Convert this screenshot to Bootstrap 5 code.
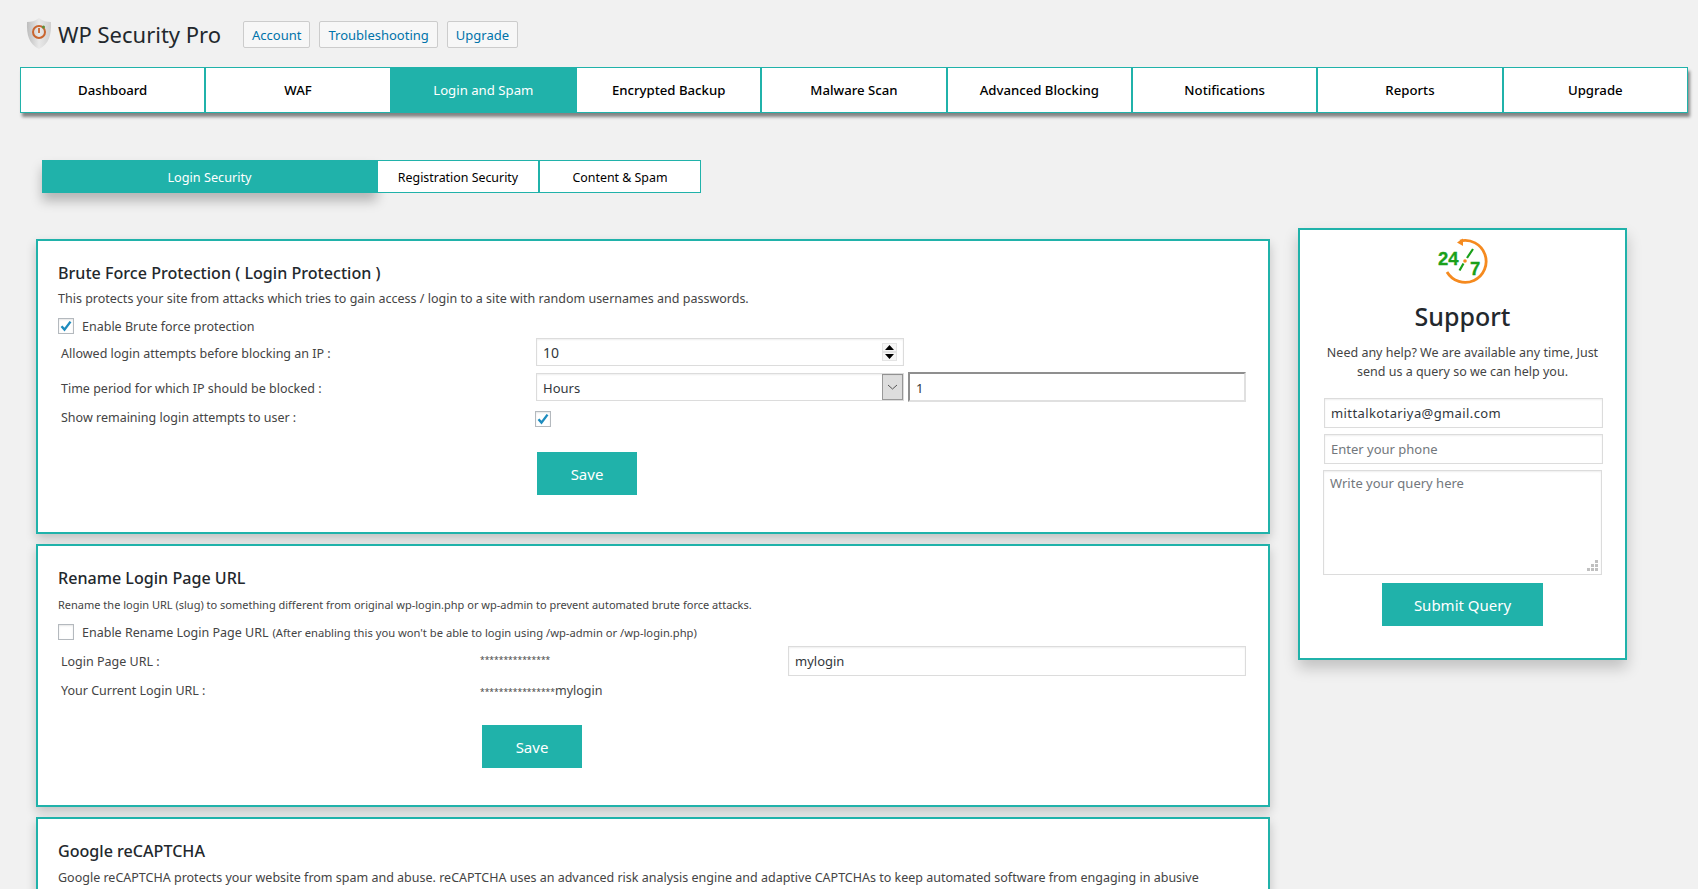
<!DOCTYPE html>
<html lang="en">
<head>
<meta charset="utf-8">
<title>WP Security Pro</title>
<link href="https://cdn.jsdelivr.net/npm/bootstrap@5.3.0/dist/css/bootstrap.min.css" rel="stylesheet">
<style>
html,body{height:889px;overflow:hidden}
body{background:#f1f1f1;font-family:"Noto Sans",sans-serif;font-size:12.5px;color:#444;line-height:20px}
.hdr{padding:17px 0 0 26px;height:67px}
.hdr-title{font-size:22px;line-height:35px;color:#23282d;margin:0 22px 0 6px;font-weight:400}
.hdr-logo{margin-top:1px}
.hdr-btn{border:1px solid #ccc;background:#f7f7f7;color:#0073aa;font-size:13px;line-height:26px;height:27px;padding:0 8px;border-radius:2px;margin:4px 9px 0 0;text-decoration:none}
.tabs{margin:0 10px 0 20px;box-shadow:2px 4px 3px rgba(0,0,0,.45);height:46px}
.tab-i{flex:1 1 0;border:1px solid #20b2aa;background:#fff;color:#000;font-size:13.2px;font-weight:500;text-decoration:none}
.tab-i.on{background:#20b2aa;color:#fff;font-weight:400}
.subs{margin:47px 0 0 42px;height:33px}
.sub-i{width:162px;border:1px solid #20b2aa;background:#fff;color:#000;font-size:12.4px;text-decoration:none;padding-top:2px}
.sub-i.on{width:335px;background:#20b2aa;color:#fff;box-shadow:0 8px 12px rgba(0,0,0,.25);font-size:12.7px;padding-top:0}
.main-wrap{margin:35px 0 0 36px}
.left-col{width:1234px;margin-top:11px}
.pane{border:2px solid #20b2aa;border-radius:0;background:#fff;padding:20px 20px 37px 20px;margin-bottom:10px;box-shadow:0 5px 10px rgba(0,0,0,.2)}
.pane h6{font-size:16.1px;line-height:24px;font-weight:500;color:#23282d;margin:0 0 3px}
.pane p{margin:0 0 -2px;line-height:22px;color:#444}
.pane p.tiny{font-size:11px}
.pane-b h6{margin-bottom:4px}
.chk{appearance:none;width:16px;height:16px;border:1px solid #b4b9be;background:#fff;box-shadow:inset 0 1px 2px rgba(0,0,0,.1);flex:none;margin:0}
.chk:checked{background:#fff url("data:image/svg+xml,%3Csvg xmlns='http://www.w3.org/2000/svg' viewBox='0 0 16 16'%3E%3Cpath d='M3.5 8.2l3 3.4 6-8' fill='none' stroke='%231e8cbe' stroke-width='2.4'/%3E%3C/svg%3E") center/16px no-repeat}
.chk-row{height:16px;margin-top:10px}
.chk-row label{margin-left:8px;line-height:16px;padding-top:2px}
.chk-row small{font-size:11.2px;margin-left:4px}
.lbl{width:478px;padding:4px 0 0 3px;flex:none}
.fld{border:1px solid #dcdcdc;border-radius:0;box-shadow:inset 0 1px 2px rgba(0,0,0,.07);height:28px;padding:1px 6px 0;font-size:13px;color:#32373c;background:#fff;line-height:26px}
.fld:focus{box-shadow:none;border-color:#dcdcdc}
.fld-big{font-size:14px}
.fld-wrap{width:368px}
.spin{right:7px;top:5px}
.sel{width:368px;appearance:none;background:#fff url("data:image/svg+xml,%3Csvg xmlns='http://www.w3.org/2000/svg' width='21' height='26'%3E%3Crect x='.5' y='.5' width='20' height='25' fill='%23ddd' stroke='%23999'/%3E%3Cpath d='M6 11l4.5 4 4.500-4' fill='none' stroke='%23555'/%3E%3C/svg%3E") right center no-repeat}
.inp-1{width:338px;margin-left:4px;height:30px;border-width:2px;border-color:#8f8f8f #e0e0e0 #e0e0e0 #8f8f8f;box-shadow:none}
.inp-1:focus{border-color:#8f8f8f #e0e0e0 #e0e0e0 #8f8f8f}
.row-a{margin-top:4px;height:28px}
.row-b{margin-top:6px;height:30px}
.row-c{margin-top:9px;height:16px}
.row-c .lbl{margin-top:-5px;width:477px;padding-top:2px}
.go{display:block;width:100px;height:43px;background:#20b2aa;color:#fff;font-size:15px;border:0;border-radius:0;padding:2px 0 0;margin:25px 0 0 479px}
.go:hover{background:#20b2aa;color:#fff}
.go.g2{margin-left:424px}
.lbl2{width:422px;padding:2px 0 0 3px;flex:none}
.stars{width:308px;flex:none;font-size:8.5px;line-height:20px}
.stars2{font-size:8.5px}
.row-d{margin-top:6px;height:30px}
.row-d .fld{width:458px;height:30px;flex:none;padding-top:0}
.row-d .stars{margin-top:-2px}
.row-e{margin-top:4px;height:20px}
.row-e .cur{padding-top:2px}
.help{width:329px;height:432px;margin-left:28px;border:2px solid #20b2aa;background:#fff;box-shadow:0 8px 14px rgba(0,0,0,.2);border-radius:0;padding:5px 24px 0}
.help h4{font-size:25px;line-height:32px;font-weight:500;color:#23282d;margin:15px 0 11px;text-align:center}
.help p{line-height:19px;margin:0 0 17px;text-align:center}
.help .fld{display:block;width:279px;height:30px;margin:0 0 6px;font-size:13px;line-height:28px;padding-top:0}
.help .fld.mail{letter-spacing:.4px}
.help .fld::placeholder,.help .area::placeholder{color:#72777c;opacity:1}
.help .area{height:105px;margin:0 0 8px -1px;resize:none;padding:2px 6px;line-height:20px;background:#fff url("data:image/svg+xml,%3Csvg xmlns='http://www.w3.org/2000/svg' width='11' height='11' fill='%23c0c0c0'%3E%3Crect x='8' width='3' height='3'/%3E%3Crect x='4' y='4' width='3' height='3'/%3E%3Crect x='8' y='4' width='3' height='3'/%3E%3Crect y='8' width='3' height='3'/%3E%3Crect x='4' y='8' width='3' height='3'/%3E%3Crect x='8' y='8' width='3' height='3'/%3E%3C/svg%3E") right 3px bottom 3px no-repeat}
.go-wide{width:161px;margin:0 auto;display:block;font-size:15px}
.logo247{margin-left:4px}
</style>
</head>
<body>
<div class="hdr d-flex align-items-start">
  <svg class="hdr-logo" width="26" height="31" viewBox="0 0 26 31" aria-label="shield logo">
    <defs><linearGradient id="sg" x1="0" x2="1" y1="0" y2="0"><stop offset="0" stop-color="#bdbdbd"/><stop offset=".5" stop-color="#e9e9e9"/><stop offset="1" stop-color="#cfcfcf"/></linearGradient></defs>
    <path d="M13 0C9 3 5 4 1 4c-.5 13 2 22 12 27 10-5 12.500-14 12-27-4 0-8-1-12-4z" fill="url(#sg)"/>
    <circle cx="13" cy="14" r="6" fill="none" stroke="#c9652f" stroke-width="2"/>
    <path d="M13 10v5" stroke="#c9652f" stroke-width="1.800"/>
    <circle cx="17.500" cy="9" r="1.500" fill="#5b8f3a"/>
  </svg>
  <h1 class="hdr-title">WP Security Pro</h1>
  <a class="hdr-btn" href="#">Account</a>
  <a class="hdr-btn" href="#">Troubleshooting</a>
  <a class="hdr-btn" href="#">Upgrade</a>
</div>

<nav class="tabs d-flex">
  <a class="tab-i d-flex align-items-center justify-content-center" href="#">Dashboard</a>
  <a class="tab-i d-flex align-items-center justify-content-center" href="#">WAF</a>
  <a class="tab-i on d-flex align-items-center justify-content-center" href="#">Login and Spam</a>
  <a class="tab-i d-flex align-items-center justify-content-center" href="#">Encrypted Backup</a>
  <a class="tab-i d-flex align-items-center justify-content-center" href="#">Malware Scan</a>
  <a class="tab-i d-flex align-items-center justify-content-center" href="#">Advanced Blocking</a>
  <a class="tab-i d-flex align-items-center justify-content-center" href="#">Notifications</a>
  <a class="tab-i d-flex align-items-center justify-content-center" href="#">Reports</a>
  <a class="tab-i d-flex align-items-center justify-content-center" href="#">Upgrade</a>
</nav>

<div class="subs d-flex">
  <a class="sub-i on d-flex align-items-center justify-content-center" href="#">Login Security</a>
  <a class="sub-i d-flex align-items-center justify-content-center" href="#">Registration Security</a>
  <a class="sub-i d-flex align-items-center justify-content-center" href="#">Content &amp; Spam</a>
</div>

<div class="main-wrap d-flex align-items-start">
  <div class="left-col">
    <section class="pane">
      <h6>Brute Force Protection ( Login Protection )</h6>
      <p>This protects your site from attacks which tries to gain access / login to a site with random usernames and passwords.</p>
      <div class="chk-row d-flex align-items-center"><input class="chk" type="checkbox" id="c1" checked><label for="c1">Enable Brute force protection</label></div>
      <div class="row-a d-flex align-items-center">
        <div class="lbl">Allowed login attempts before blocking an IP :</div>
        <div class="fld-wrap position-relative">
          <input class="fld fld-big form-control" type="text" value="10">
          <svg class="spin position-absolute" width="15" height="18" viewBox="0 0 15 18"><rect width="15" height="18" fill="#e4e4e4"/><rect x="1" y="1" width="13" height="7" fill="#f6f6f6"/><rect x="1" y="10" width="13" height="7" fill="#f6f6f6"/><path d="M7.500 2l4.500 5H3z M7.500 16L3 11h9z" fill="#000"/></svg>
        </div>
      </div>
      <div class="row-b d-flex align-items-center">
        <div class="lbl">Time period for which IP should be blocked :</div>
        <select class="fld sel"><option>Hours</option></select>
        <input class="fld inp-1 form-control" type="text" value="1">
      </div>
      <div class="row-c d-flex align-items-center">
        <div class="lbl">Show remaining login attempts to user :</div>
        <input class="chk" type="checkbox" checked>
      </div>
      <button class="btn go" type="button">Save</button>
    </section>

    <section class="pane pane-b">
      <h6>Rename Login Page URL</h6>
      <p class="tiny">Rename the login URL (slug) to something different from original wp-login.php or wp-admin to prevent automated brute force attacks.</p>
      <div class="chk-row d-flex align-items-center"><input class="chk" type="checkbox" id="c2"><label for="c2">Enable Rename Login Page URL<small>(After enabling this you won't be able to login using /wp-admin or /wp-login.php)</small></label></div>
      <div class="row-d d-flex align-items-center">
        <div class="lbl2">Login Page URL :</div>
        <div class="stars">***************</div>
        <input class="fld form-control" type="text" value="mylogin">
      </div>
      <div class="row-e d-flex align-items-center">
        <div class="lbl2">Your Current Login URL :</div>
        <div class="cur"><span class="stars2">****************</span>mylogin</div>
      </div>
      <button class="btn go g2" type="button">Save</button>
    </section>

    <section class="pane pane-b">
      <h6>Google reCAPTCHA</h6>
      <p>Google reCAPTCHA protects your website from spam and abuse. reCAPTCHA uses an advanced risk analysis engine and adaptive CAPTCHAs to keep automated software from engaging in abusive</p>
    </section>
  </div>

  <aside class="help">
    <div class="text-center">
      <svg class="logo247" width="60" height="50" viewBox="15 5 60 50" aria-label="24/7">
        <path d="M40 11A21 21 0 1 1 27 42" fill="none" stroke="#f58a1f" stroke-width="2.800"/>
        <polygon points="37,12.500 43,8.500 43,16" fill="#f58a1f"/>
        <text x="18" y="35" font-family="Liberation Sans" font-weight="700" font-size="18.500" fill="#1aa01a" stroke="#1aa01a" stroke-width=".3">24</text>
        <text x="50" y="45" font-family="Liberation Sans" font-weight="700" font-size="18.500" fill="#1aa01a" stroke="#1aa01a" stroke-width=".3">7</text>
        <path d="M53 19l-6 9M43.500 33.500l-4 7" stroke="#1aa01a" stroke-width="2.200" fill="none"/>
        <circle cx="45" cy="31" r="1.800" fill="#f58a1f"/>
      </svg>
    </div>
    <h4>Support</h4>
    <p>Need any help? We are available any time, Just send us a query so we can help you.</p>
    <input class="fld mail form-control" type="text" value="mittalkotariya@gmail.com">
    <input class="fld form-control" type="text" placeholder="Enter your phone">
    <textarea class="fld area form-control" placeholder="Write your query here"></textarea>
    <button class="btn go go-wide" type="button">Submit Query</button>
  </aside>
</div>
<script src="https://cdn.jsdelivr.net/npm/bootstrap@5.3.0/dist/js/bootstrap.bundle.min.js"></script>
</body>
</html>
